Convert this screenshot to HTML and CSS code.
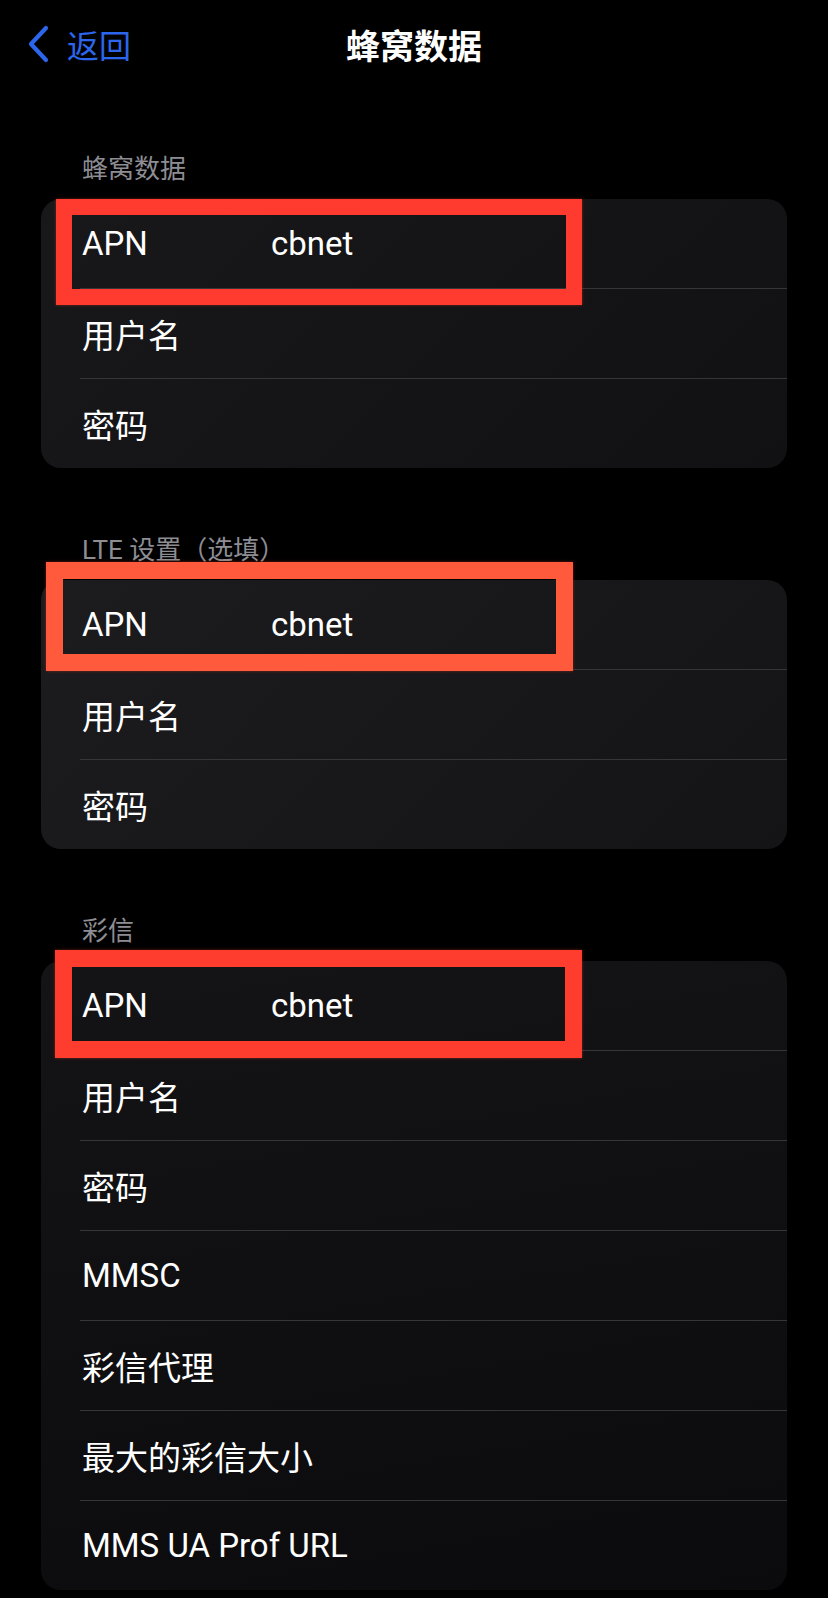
FILE: index.html
```html
<!DOCTYPE html>
<html lang="zh-CN">
<head>
  <meta charset="UTF-8">
  <title>蜂窝数据</title>
  <link rel="stylesheet" href="styles.css">
</head>
<body>

  <div class="navbar">
    <div class="nav-back">
      <svg class="chevron" width="24" height="38" viewBox="0 0 24 38">
        <path d="M20 3 L5 19 L20 35" fill="none" stroke="#2c66ec" stroke-width="4.2" stroke-linecap="round" stroke-linejoin="round"/>
      </svg>
      <span>返回</span>
    </div>
    <div class="nav-title">蜂窝数据</div>
    <div></div>
  </div>

  <div class="section">
    <div class="section-header">蜂窝数据</div>
    <div class="card card-a">
      <div class="row"><span class="label">APN</span><span class="value">cbnet</span></div>
      <div class="row"><span class="label">用户名</span></div>
      <div class="row"><span class="label">密码</span></div>
      <div class="mark mark-1"></div>
    </div>
  </div>

  <div class="section">
    <div class="section-header">LTE 设置（选填）</div>
    <div class="card card-b">
      <div class="row"><span class="label">APN</span><span class="value">cbnet</span></div>
      <div class="row"><span class="label">用户名</span></div>
      <div class="row"><span class="label">密码</span></div>
      <div class="mark mark-2"></div>
    </div>
  </div>

  <div class="section">
    <div class="section-header">彩信</div>
    <div class="card card-c">
      <div class="row"><span class="label">APN</span><span class="value">cbnet</span></div>
      <div class="row"><span class="label">用户名</span></div>
      <div class="row"><span class="label">密码</span></div>
      <div class="row"><span class="label">MMSC</span></div>
      <div class="row"><span class="label">彩信代理</span></div>
      <div class="row"><span class="label">最大的彩信大小</span></div>
      <div class="row"><span class="label">MMS UA Prof URL</span></div>
      <div class="mark mark-3"></div>
    </div>
  </div>

</body>
</html>
```

FILE: styles.css
```css
body {
  margin: 0;
  background-color: #000;
  color: #fff;
  font-family: Roboto, "Noto Sans CJK SC", sans-serif;
}

.navbar {
  height: 88px;
  display: grid;
  grid-template-columns: 1fr auto 1fr;
  align-items: center;
}

.nav-back {
  display: flex;
  align-items: center;
  gap: 17px;
  padding-left: 26px;
  color: #2c66ec;
  font-size: 32px;
}

.nav-title {
  font-size: 34px;
  font-weight: bold;
}

.section {
  margin-top: 66px;
}

.navbar + .section {
  margin-top: 65px;
}

.section-header {
  padding: 0 0 14px 82px;
  font-size: 26px;
  line-height: 32px;
  color: #8d8d93;
}

.card {
  position: relative;
  margin: 0 41px;
  border-radius: 20px;
  background: linear-gradient(135deg, #18181a, #111113);
}

.card-b {
  background: linear-gradient(135deg, #1c1b1e, #141416);
}

.card-c {
  background: linear-gradient(170deg, #141416, #0b0b0d);
}

.row {
  display: flex;
  align-items: center;
  height: 89px;
  margin-left: 39px;
  padding-left: 2px;
  font-size: 33px;
  white-space: nowrap;
}

.row + .row {
  border-top: 1px solid #363638;
}

.label {
  flex-shrink: 0;
  min-width: 189px;
}

/* red highlight frames drawn over the APN rows */
.mark {
  position: absolute;
  box-sizing: border-box;
  border: 17px solid #ff3b2f;
  box-shadow: 0 0 3px rgba(255, 60, 40, 0.4);
}

.mark-1 {
  top: 0;
  left: 15px;
  width: 526px;
  height: 106px;
  border-width: 16px;
}

.mark-2 {
  top: -18px;
  left: 5px;
  width: 527px;
  height: 109px;
  border-color: #ff5a3c;
}

.mark-3 {
  top: -11px;
  left: 14px;
  width: 527px;
  height: 108px;
  border-color: #ff3d2e;
}
```
